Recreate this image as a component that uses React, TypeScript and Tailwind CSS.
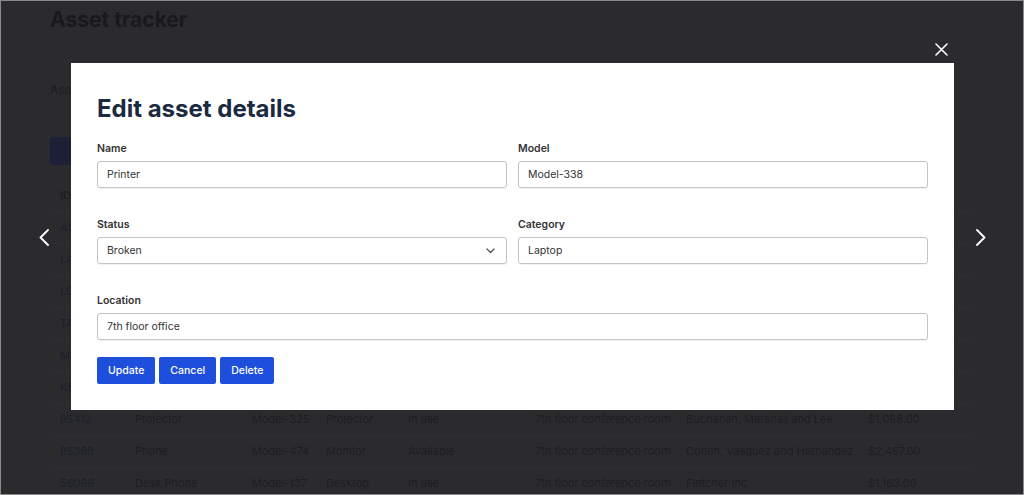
import React from 'react';

const rows = [
  ['ID', 'Name', 'Model', 'Category', 'Status', 'Location', 'Vendor', 'Price'],
  ['AS1042', 'Laptop', 'Model-118', 'Laptop', 'In use', '3rd floor office', 'Walker Group', '$1,299.00'],
  ['LA2291', 'Monitor', 'Model-204', 'Monitor', 'Available', '5th floor office', 'Reed LLC', '$349.00'],
  ['LO3310', 'Keyboard', 'Model-077', 'Accessory', 'In use', '2nd floor office', 'Hart and Sons', '$89.00'],
  ['TA4107', 'Tablet', 'Model-512', 'Tablet', 'Broken', 'Storage room', 'Nguyen PLC', '$649.00'],
  ['MO5523', 'Mouse', 'Model-031', 'Accessory', 'Available', 'Reception', 'Price Inc', '$39.00'],
  ['KE6618', 'Printer', 'Model-338', 'Laptop', 'Broken', '7th floor office', 'Lopez Ltd', '$980.00'],
  ['95412', 'Projector', 'Model-325', 'Projector', 'In use', '7th floor conference room', 'Buchanan, Marshall and Lee', '$1,068.00'],
  ['85388', 'Phone', 'Model-474', 'Monitor', 'Available', '7th floor conference room', 'Cohen, Vasquez and Hernandez', '$2,467.00'],
  ['56066', 'Desk Phone', 'Model-137', 'Desktop', 'In use', '7th floor conference room', 'Fletcher Inc', '$1,163.00'],
];

const cols = ['w-[75px]', 'w-[117px]', 'w-[74px]', 'w-[82px]', 'w-[127px]', 'w-[151px]', 'w-[182px]', 'flex-1'];

function Field({ label, value, select }: { label: string; value: string; select?: boolean }) {
  return (
    <div className="flex flex-col">
      <label className="text-[10.5px] leading-4 font-semibold text-[#333] mt-px mb-[4px]">{label}</label>
      <div className="h-[27px] rounded-[3px] border border-[#c4c4c4] shadow-[0_1px_1px_rgba(0,0,0,0.06)] flex items-center justify-between px-[9px] text-[10.5px] text-[#333]">
        <span>{value}</span>
        {select && (
          <svg width="9" height="6" viewBox="0 0 9 6" fill="none" stroke="#555" strokeWidth="1.3" strokeLinecap="round" strokeLinejoin="round" className="mr-[2px]">
            <path d="M1 1l3.5 3.5L8 1" />
          </svg>
        )}
      </div>
    </div>
  );
}

export default function App() {
  return (
    <div className="relative w-[1024px] h-[495px] overflow-hidden bg-[#2b2b2d] font-['Inter',sans-serif]">
      {/* page underneath, seen through the dim backdrop */}
      <div className="px-[50px] text-[#1d1d1f]">
        <h1 className="text-[21px] font-bold leading-[40px] text-[#19191b]">Asset tracker</h1>
        <p className="mt-[42px] text-[12px] leading-[16px]">Assets currently registered across all offices.</p>
        <div className="mt-[39px] h-[28px] w-[120px] rounded-[3px] bg-[#1c2036]" />
        <div className="mt-[15px]">
          {rows.map((r, i) => (
            <div key={i} className="flex h-[32px] items-center border-b border-[#2f2f31] text-[11px]">
              {r.map((c, j) => (
                <div key={j} className={`${cols[j]} pl-[10px] whitespace-nowrap overflow-hidden ${i === 0 ? 'font-semibold' : ''} ${j === 0 && i > 0 ? 'text-[#1b1e2e]' : ''}`}>
                  {c}
                </div>
              ))}
            </div>
          ))}
        </div>
      </div>

      <button className="absolute left-[935px] top-[43px] text-white">
        <svg width="13" height="13" viewBox="0 0 13 13" fill="none" stroke="currentColor" strokeWidth="1.6" strokeLinecap="round">
          <path d="M1 1l11 11M12 1L1 12" />
        </svg>
      </button>
      <button className="absolute left-[39px] top-[229px] text-white">
        <svg width="10" height="17" viewBox="0 0 10 17" fill="none" stroke="currentColor" strokeWidth="1.8" strokeLinecap="round" strokeLinejoin="round">
          <path d="M9 1L1.5 8.5 9 16" />
        </svg>
      </button>
      <button className="absolute left-[976px] top-[229px] text-white">
        <svg width="10" height="17" viewBox="0 0 10 17" fill="none" stroke="currentColor" strokeWidth="1.8" strokeLinecap="round" strokeLinejoin="round">
          <path d="M1 1l7.5 7.5L1 16" />
        </svg>
      </button>

      {/* modal */}
      <div className="absolute left-[71px] top-[63px] w-[883px] bg-white px-[26px] pt-[28px] pb-[26px]">
        <h2 className="text-[24px] leading-[35px] font-bold text-[#1b2a41]">Edit asset details</h2>
        <div className="mt-[14px] grid grid-cols-2 gap-x-[11px] gap-y-[28px]">
          <Field label="Name" value="Printer" />
          <Field label="Model" value="Model-338" />
          <Field label="Status" value="Broken" select />
          <Field label="Category" value="Laptop" />
          <div className="col-span-2">
            <Field label="Location" value="7th floor office" />
          </div>
        </div>
        <div className="mt-[17px] flex gap-[4px]">
          {['Update', 'Cancel', 'Delete'].map((b) => (
            <button key={b} className="h-[27px] px-[11px] rounded-[2px] bg-[#1e4fdc] text-white text-[10.5px] font-medium">
              {b}
            </button>
          ))}
        </div>
      </div>

      {/* screenshot frame */}
      <div className="absolute inset-0 border border-[#8a8a8a] pointer-events-none" />
    </div>
  );
}
